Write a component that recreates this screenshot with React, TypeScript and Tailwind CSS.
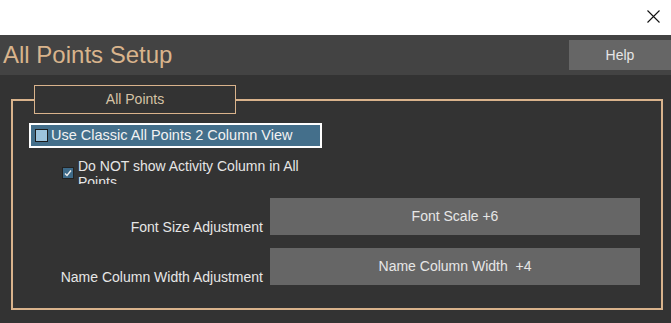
export default function App() {
  return (
    <div
      className="w-[671px] h-[323px] flex flex-col overflow-hidden"
      style={{ fontFamily: '"Liberation Sans", Arial, sans-serif' }}
    >
      {/* window chrome */}
      <div className="h-[35px] bg-white flex items-center justify-end pr-[11px]">
        <svg width="13" height="13" viewBox="0 0 13 13" className="mt-[-3px]">
          <path d="M0.5 0.5 L12.5 12.5 M12.5 0.5 L0.5 12.5" stroke="#111" strokeWidth="1.1" fill="none" />
        </svg>
      </div>

      {/* header */}
      <div className="h-[40px] bg-[#434343] flex items-center justify-between">
        <h1 className="pl-[3px] text-[24px] leading-none text-[#d9b48c] pb-[1px]">All Points Setup</h1>
        <button className="w-[102px] h-[30px] bg-[#666666] text-[#e6e6e6] text-[14px]">Help</button>
      </div>

      {/* body */}
      <div className="flex-1 bg-[#333333] pt-[10px]">
        <fieldset className="ml-[11px] w-[652px] h-[225px] border-2 border-[#d9b38c] px-0 pb-0 m-0">
          <legend className="ml-[21px] w-[202px] h-[29px] border border-[#d9b38c] bg-[#333333] text-[#d6c3a6] text-[14px] flex items-center justify-center">
            All Points
          </legend>

          <div className="ml-[16px] mt-[9px] w-[293px] h-[25px] bg-[#446f8b] border-2 border-white flex items-center pl-[4px] gap-[3px]">
            <span className="w-[13px] h-[13px] bg-[#9cc3dc] border border-[#1b1b1b] shrink-0" />
            <span className="text-[14.5px] text-[#f2f2f2] leading-none">Use Classic All Points 2 Column View</span>
          </div>

          <div className="ml-[49px] mt-[10px] flex items-start gap-[4px]">
            <span className="mt-[9px] w-[12px] h-[12px] bg-[#3e6a88] border border-[#222] shrink-0 flex items-center justify-center">
              <svg width="8" height="8" viewBox="0 0 8 8">
                <path d="M1 4.5 L3 6.5 L7 1.5" stroke="#f0f0f0" strokeWidth="1.4" fill="none" />
              </svg>
            </span>
            <div className="w-[232px] h-[26px] overflow-hidden text-[14px] leading-[16px] text-[#e6e6e6]">
              Do NOT show Activity Column in All Points
            </div>
          </div>

          <div className="mt-[14px] grid grid-cols-[250px_370px] gap-x-[7px] gap-y-[13px]">
            <div className="flex items-end justify-end text-[14px] text-[#e6e6e6] leading-[14px] pb-[1px]">Font Size Adjustment</div>
            <button className="h-[37px] bg-[#666666] text-[14px] text-[#e6e6e6]">Font Scale +6</button>
            <div className="flex items-end justify-end text-[14px] text-[#e6e6e6] leading-[14px] pb-[1px]">Name Column Width Adjustment</div>
            <button className="h-[37px] bg-[#666666] text-[14px] text-[#e6e6e6] whitespace-pre">Name Column Width  +4</button>
          </div>
        </fieldset>
      </div>
    </div>
  );
}
